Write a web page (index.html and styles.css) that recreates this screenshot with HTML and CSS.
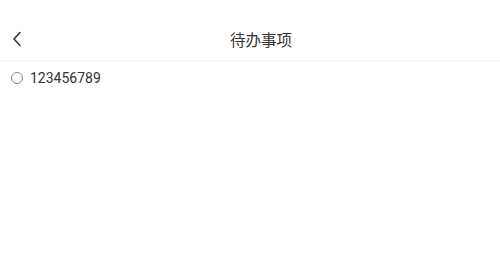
FILE: index.html
```html
<!DOCTYPE html>
<html>
<head>
<meta charset="utf-8">
<link rel="stylesheet" href="styles.css">
</head>
<body>
<div class="page">
  <header class="nav">
    <div class="back">
      <svg width="10" height="16" viewBox="0 0 10 16"><path d="M8 1.5 L2 8 L8 14.5" fill="none" stroke="#333" stroke-width="1.6" stroke-linecap="round" stroke-linejoin="round"/></svg>
    </div>
    <div class="title">待办事项</div>
  </header>
  <ul class="list">
    <li class="item"><span class="radio"></span><span class="label">123456789</span></li>
  </ul>
</div>
</body>
</html>
```
FILE: styles.css
```css
html, body { margin: 0; padding: 0; background: #fff; }
body { font-family: Roboto, "Noto Sans CJK SC", sans-serif; color: #333; }
.page { width: 500px; }
.nav {
  height: 61px;
  padding-top: 18px;
  display: flex;
  align-items: center;
  position: relative;
  border-bottom: 1px solid #f0f0f0;
  box-sizing: border-box;
  padding-left: 12px;
}
.back { width: 10px; height: 16px; display: flex; }
.title {
  position: absolute;
  left: 230px;
  top: 18px;
  height: 42px;
  line-height: 42px;
  font-size: 15.5px;
  color: #333;
  font-family: "Noto Sans CJK SC", sans-serif;
}
.list { list-style: none; margin: 0; padding: 0; }
.item {
  display: flex;
  align-items: center;
  height: 34px;
  padding-left: 11px;
}
.radio {
  width: 10px; height: 10px;
  border: 1px solid #888;
  border-radius: 50%;
  margin-right: 7px;
}
.label { font-size: 14px; color: #333; }
```
